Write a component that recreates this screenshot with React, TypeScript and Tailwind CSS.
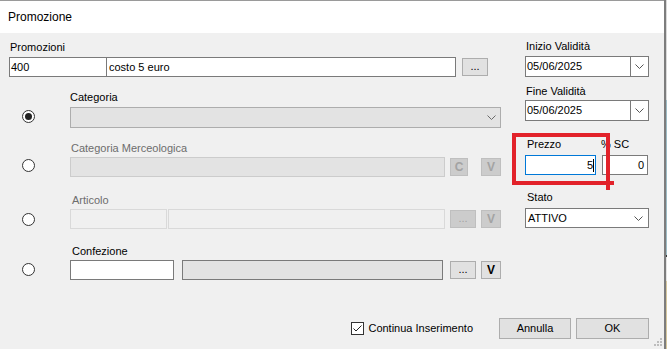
const Chevron = ({ color = "#555" }: { color?: string }) => (
  <svg width="9" height="5" viewBox="0 0 9 5" fill="none">
    <path d="M0.5 0.5 L4.5 4.5 L8.5 0.5" stroke={color} strokeWidth="1" />
  </svg>
);

const Radio = ({ checked = false }: { checked?: boolean }) => (
  <div className="w-[13px] h-[13px] rounded-full border border-[#333] bg-white flex items-center justify-center">
    {checked && <div className="w-[7px] h-[7px] rounded-full bg-[#222]" />}
  </div>
);

export default function App() {
  return (
    <div className="relative w-[667px] h-[349px] flex overflow-hidden font-['Liberation_Sans',Arial,sans-serif] text-[11px] text-black">
      {/* dialog */}
      <div className="w-[666px] flex flex-col border-r-2 border-[#7d7d7d]">
        <div className="h-[33px] bg-white border-t border-[#9a9a9a] flex items-center pl-[8px] text-[12px]">
          Promozione
        </div>

        <div className="flex-1 bg-[#f0f0f0] flex flex-col">
          <div className="flex">
            {/* left column */}
            <div className="w-[525px] pl-[9px] pt-[7px] flex flex-col">
              <div className="h-[15px] leading-[15px] pl-[1px]">Promozioni</div>
              <div className="mt-[2px] h-[20px] flex items-center">
                <div className="w-[98px] h-[20px] bg-white border border-[#7a7a7a] pl-[1px] leading-[18px]">400</div>
                <div className="w-[350px] -ml-[1px] h-[20px] bg-white border border-[#7a7a7a] pl-[2px] leading-[18px]">
                  costo 5 euro
                </div>
                <div className="ml-[6px] w-[26px] h-[18px] bg-[#e1e1e1] border border-[#adadad] flex items-center justify-center leading-none pb-[2px]">
                  ...
                </div>
              </div>

              {/* Categoria */}
              <div className="mt-[13px] flex flex-col">
                <div className="ml-[61px] h-[15px] leading-[15px]">Categoria</div>
                <div className="mt-[2px] flex items-center h-[21px]">
                  <div className="w-[61px] pl-[13px] -mt-[2px]">
                    <Radio checked />
                  </div>
                  <div className="w-[431px] h-[21px] bg-[#e3e3e3] border border-[#adadad] flex items-center justify-end pr-[4px]">
                    <Chevron color="#6a6a6a" />
                  </div>
                </div>
              </div>

              {/* Categoria Merceologica */}
              <div className="mt-[13px] flex flex-col">
                <div className="ml-[62px] h-[15px] leading-[15px] text-[#6d6d6d]">Categoria Merceologica</div>
                <div className="mt-[1px] flex items-center h-[20px]">
                  <div className="w-[61px] pl-[13px] -mt-[3px]">
                    <Radio />
                  </div>
                  <div className="w-[375px] h-[20px] bg-[#e3e3e3] border border-[#cccccc]" />
                  <div className="ml-[5px] w-[18px] h-[18px] bg-[#cccccc] border border-[#bfbfbf] flex items-center justify-center font-bold text-[#a3a3a3] text-[12px]">
                    C
                  </div>
                  <div className="ml-[13px] w-[20px] h-[18px] bg-[#cccccc] border border-[#bfbfbf] flex items-center justify-center font-bold text-[#a3a3a3] text-[12px]">
                    V
                  </div>
                </div>
              </div>

              {/* Articolo */}
              <div className="mt-[16px] flex flex-col">
                <div className="ml-[63px] h-[15px] leading-[15px] text-[#6d6d6d]">Articolo</div>
                <div className="mt-[1px] flex items-center h-[20px]">
                  <div className="w-[61px] pl-[13px]">
                    <Radio />
                  </div>
                  <div className="w-[97px] h-[20px] bg-[#f0f0f0] border border-[#d9d9d9]" />
                  <div className="ml-[1px] w-[277px] h-[20px] bg-[#f0f0f0] border border-[#d9d9d9]" />
                  <div className="ml-[5px] w-[26px] h-[18px] bg-[#cccccc] border border-[#bfbfbf] flex items-center justify-center text-[#a3a3a3] leading-none pb-[2px]">
                    ...
                  </div>
                  <div className="ml-[5px] w-[20px] h-[18px] bg-[#cccccc] border border-[#bfbfbf] flex items-center justify-center font-bold text-[#a3a3a3] text-[12px]">
                    V
                  </div>
                </div>
              </div>

              {/* Confezione */}
              <div className="mt-[15px] flex flex-col">
                <div className="ml-[63px] h-[15px] leading-[15px]">Confezione</div>
                <div className="mt-[1px] flex items-center h-[20px]">
                  <div className="w-[61px] pl-[13px] -mt-[1px]">
                    <Radio />
                  </div>
                  <div className="w-[104px] h-[20px] bg-white border border-[#7a7a7a]" />
                  <div className="ml-[8px] w-[261px] h-[20px] bg-[#e3e3e3] border border-[#7a7a7a]" />
                  <div className="ml-[7px] w-[26px] h-[18px] bg-[#e1e1e1] border border-[#adadad] flex items-center justify-center leading-none pb-[2px]">
                    ...
                  </div>
                  <div className="ml-[5px] w-[20px] h-[18px] bg-[#e1e1e1] border border-[#adadad] flex items-center justify-center font-bold text-[12px]">
                    V
                  </div>
                </div>
              </div>
            </div>

            {/* right column */}
            <div className="w-[124px] pt-[6px] flex flex-col">
              <div className="h-[15px] leading-[15px] pl-[1px]">Inizio Validità</div>
              <div className="mt-[2px] h-[21px] flex bg-white border border-[#7a7a7a]">
                <div className="flex-1 pl-[1px] leading-[19px]">05/06/2025</div>
                <div className="w-[18px] border-l border-[#7a7a7a] flex items-center justify-center">
                  <Chevron />
                </div>
              </div>

              <div className="mt-[7px] h-[15px] leading-[15px] pl-[1px]">Fine Validità</div>
              <div className="mt-[1px] h-[21px] flex bg-white border border-[#7a7a7a]">
                <div className="flex-1 pl-[1px] leading-[19px]">05/06/2025</div>
                <div className="w-[18px] border-l border-[#7a7a7a] flex items-center justify-center">
                  <Chevron />
                </div>
              </div>

              <div className="mt-[16px] h-[15px] flex">
                <div className="w-[76px] pl-[2px] leading-[15px]">Prezzo</div>
                <div className="leading-[15px]">% SC</div>
              </div>
              <div className="mt-[3px] h-[20px] flex">
                <div className="w-[71px] h-[20px] bg-white border border-[#0078d7] flex items-center justify-end pr-[3px] leading-none">
                  5<div className="w-[1px] h-[13px] bg-black ml-[0px] -mr-[2px]" />
                </div>
                <div className="ml-[6px] w-[46px] h-[20px] bg-white border border-[#7a7a7a] flex items-center justify-end pr-[3px] leading-none">
                  0
                </div>
              </div>

              <div className="mt-[15px] h-[15px] leading-[15px] pl-[2px]">Stato</div>
              <div className="mt-[3px] h-[20px] bg-white border border-[#7a7a7a] flex items-center justify-between pl-[2px] pr-[5px]">
                <span>ATTIVO</span>
                <Chevron />
              </div>
            </div>
          </div>

          {/* bottom row */}
          <div className="mt-auto mb-[10px] flex items-center justify-end pr-[15px]">
            <div className="w-[13px] h-[13px] bg-white border border-[#333] flex items-center justify-center">
              <svg width="11" height="11" viewBox="0 0 11 11" fill="none">
                <path d="M1.5 5.5 L4 8 L9.5 2.5" stroke="#222" strokeWidth="1" />
              </svg>
            </div>
            <span className="ml-[4px] mr-[26px]">Continua Inserimento</span>
            <div className="w-[72px] h-[21px] bg-[#e1e1e1] border border-[#adadad] flex items-center justify-center">
              Annulla
            </div>
            <div className="ml-[5px] w-[73px] h-[21px] bg-[#e1e1e1] border border-[#adadad] flex items-center justify-center">
              OK
            </div>
          </div>
        </div>
      </div>

      {/* background app behind the dialog */}
      <div className="w-[1px] flex flex-col">
        <div className="h-[100px] bg-[#d9d9d9]" />
        <div className="h-[155px] bg-[#9dbcc6]" />
        <div className="h-[2px] bg-[#3a3a3a]" />
        <div className="h-[24px] bg-[#e3e3e3]" />
        <div className="flex-1 bg-[#d6c79e]" />
      </div>

      {/* resize grip */}
      <div className="absolute right-[5px] bottom-[3px] grid grid-cols-3 gap-[1px]">
        <div className="w-[2px] h-[2px]" />
        <div className="w-[2px] h-[2px]" />
        <div className="w-[2px] h-[2px] bg-[#bdbdbd]" />
        <div className="w-[2px] h-[2px]" />
        <div className="w-[2px] h-[2px] bg-[#bdbdbd]" />
        <div className="w-[2px] h-[2px] bg-[#bdbdbd]" />
        <div className="w-[2px] h-[2px] bg-[#bdbdbd]" />
        <div className="w-[2px] h-[2px] bg-[#bdbdbd]" />
        <div className="w-[2px] h-[2px] bg-[#bdbdbd]" />
      </div>

      {/* red annotation drawn over the screenshot */}
      <div className="absolute left-[512px] top-[133px] w-[98px] h-[4px] bg-[#e2222a]" />
      <div className="absolute left-[512px] top-[133px] w-[4px] h-[52px] bg-[#e2222a]" />
      <div className="absolute left-[512px] top-[181px] w-[102px] h-[4px] bg-[#e2222a]" />
      <div className="absolute left-[606px] top-[133px] w-[4px] h-[57px] bg-[#e2222a]" />
    </div>
  );
}
